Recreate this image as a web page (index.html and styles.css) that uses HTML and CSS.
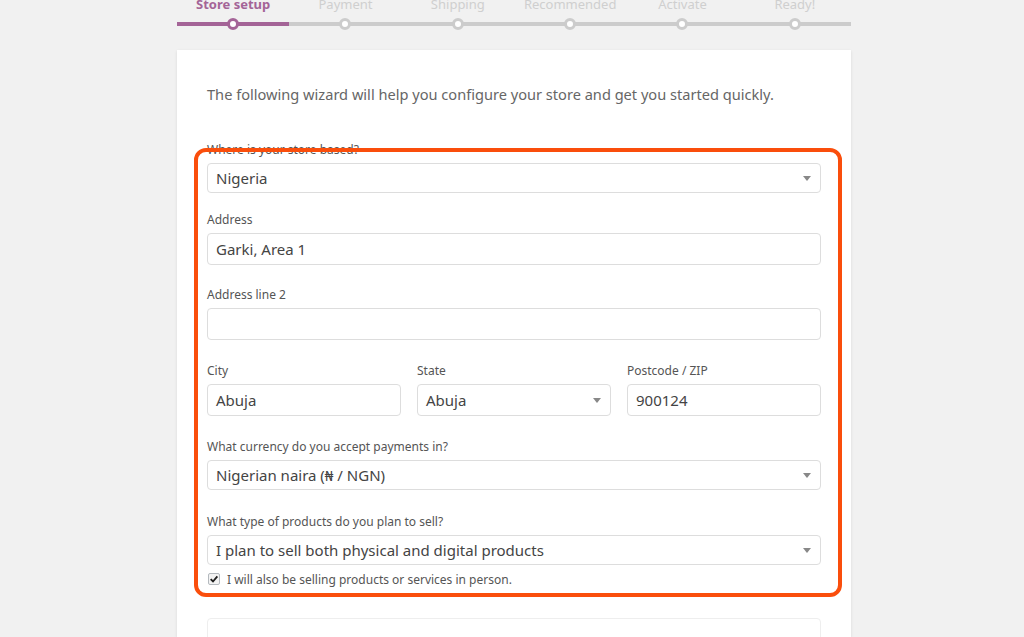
FILE: index.html
```html
<!DOCTYPE html>
<html>
<head>
<meta charset="utf-8">
<link rel="stylesheet" href="styles.css">
</head>
<body>
<div class="wrap">
  <ol class="steps">
    <li class="step active"><span class="step-name">Store setup</span><span class="bar"><span class="dot"></span></span></li>
    <li class="step"><span class="step-name">Payment</span><span class="bar"><span class="dot"></span></span></li>
    <li class="step"><span class="step-name">Shipping</span><span class="bar"><span class="dot"></span></span></li>
    <li class="step"><span class="step-name">Recommended</span><span class="bar"><span class="dot"></span></span></li>
    <li class="step"><span class="step-name">Activate</span><span class="bar"><span class="dot"></span></span></li>
    <li class="step"><span class="step-name">Ready!</span><span class="bar"><span class="dot"></span></span></li>
  </ol>

  <div class="card">
    <p class="intro">The following wizard will help you configure your store and get you started quickly.</p>

    <div class="field first">
      <label class="label">Where is your store based?</label>
      <div class="select"><span>Nigeria</span><span class="caret"></span></div>
    </div>

    <div class="field tight">
      <label class="label">Address</label>
      <div class="input">Garki, Area 1</div>
    </div>

    <div class="field">
      <label class="label">Address line 2</label>
      <div class="input"></div>
    </div>

    <div class="field row3">
      <div class="col">
        <label class="label">City</label>
        <div class="input">Abuja</div>
      </div>
      <div class="col">
        <label class="label">State</label>
        <div class="select tall"><span>Abuja</span><span class="caret"></span></div>
      </div>
      <div class="col">
        <label class="label">Postcode / ZIP</label>
        <div class="input">900124</div>
      </div>
    </div>

    <div class="field sel">
      <label class="label">What currency do you accept payments in?</label>
      <div class="select"><span>Nigerian naira (₦ / NGN)</span><span class="caret"></span></div>
    </div>

    <div class="field last">
      <label class="label">What type of products do you plan to sell?</label>
      <div class="select"><span>I plan to sell both physical and digital products</span><span class="caret"></span></div>
    </div>

    <div class="check-row">
      <span class="checkbox"><svg viewBox="0 0 12 12" width="10" height="10"><path d="M2 6.2 L4.8 9 L10 2.8" fill="none" stroke="#1e1e1e" stroke-width="2.2"/></svg></span>
      <span class="check-label">I will also be selling products or services in person.</span>
    </div>

    <div class="next-box"></div>

    <div class="highlight"></div>
  </div>
</div>
</body>
</html>
```

FILE: styles.css
```css
html, body {
  margin: 0;
  padding: 0;
  background: #f1f1f1;
  font-family: "Noto Sans", "Open Sans", sans-serif;
  height: 637px;
  overflow: hidden;
}

.wrap {
  width: 674px;
  margin-left: 177px;
}

.steps {
  list-style: none;
  margin: -5px 0 0 0;
  padding: 0;
  display: flex;
}

.step {
  flex: 1;
  display: flex;
  flex-direction: column;
  align-items: center;
}

.step-name {
  font-size: 13px;
  line-height: 18px;
  color: #cfcfcf;
  height: 18px;
  margin-bottom: 9px;
}

.step.active .step-name {
  color: #a46497;
  font-weight: 700;
}

.bar {
  position: relative;
  display: block;
  width: 100%;
  height: 4px;
  background: #cccccc;
}

.step.active .bar {
  background: #a46497;
}

.dot {
  position: absolute;
  left: 50%;
  top: 50%;
  width: 6px;
  height: 6px;
  margin: -6px 0 0 -6px;
  border: 3px solid #cccccc;
  border-radius: 50%;
  background: #fff;
}

.step.active .dot {
  border-color: #a46497;
}

.card {
  position: relative;
  margin-top: 24px;
  background: #fff;
  box-shadow: 0 1px 3px rgba(0,0,0,0.10);
  padding: 32px 30px 0 30px;
  height: 587px;
  box-sizing: border-box;
  overflow: hidden;
}

.intro {
  margin: 0 0 36px 0;
  font-size: 14.6px;
  line-height: 24px;
  color: #666;
}

.field {
  margin-bottom: 23px;
}

.field.tight {
  margin-bottom: 22px;
}

.field.first {
  margin-bottom: 19px;
}

.field.sel {
  margin-bottom: 24px;
}

.field.last {
  margin-bottom: 5px;
}

.label {
  display: block;
  font-size: 12px;
  line-height: 16px;
  color: #555;
  margin-bottom: 5px;
}

.input, .select {
  box-sizing: border-box;
  height: 32px;
  border: 1px solid #dddddd;
  border-radius: 4px;
  background: #fff;
  font-size: 15px;
  line-height: 30px;
  color: #444;
  padding: 0 8px;
}

.select {
  height: 30px;
  line-height: 28px;
  display: flex;
  justify-content: space-between;
  align-items: center;
}

.select.tall {
  height: 32px;
  line-height: 30px;
}

.caret {
  width: 0;
  height: 0;
  border-left: 4px solid transparent;
  border-right: 4px solid transparent;
  border-top: 5px solid #888;
  margin-right: 1px;
}

.row3 {
  display: grid;
  grid-template-columns: 1fr 1fr 1fr;
  column-gap: 16px;
}

.check-row {
  display: flex;
  align-items: center;
  height: 18px;
  margin-left: 1px;
}

.checkbox {
  box-sizing: border-box;
  width: 12px;
  height: 12px;
  border: 1px solid #b4b9be;
  border-radius: 2px;
  background: #f3f3f3;
  display: flex;
  align-items: center;
  justify-content: center;
  margin-right: 7px;
}

.check-label {
  font-size: 12px;
  color: #555;
}

.next-box {
  margin-top: 30px;
  height: 40px;
  border: 1px solid #eeeeee;
  border-radius: 4px;
}

.highlight {
  position: absolute;
  left: 17px;
  top: 98px;
  width: 648px;
  height: 449px;
  box-sizing: border-box;
  border: 4px solid #fa4e0c;
  border-radius: 12px;
  pointer-events: none;
}
```
